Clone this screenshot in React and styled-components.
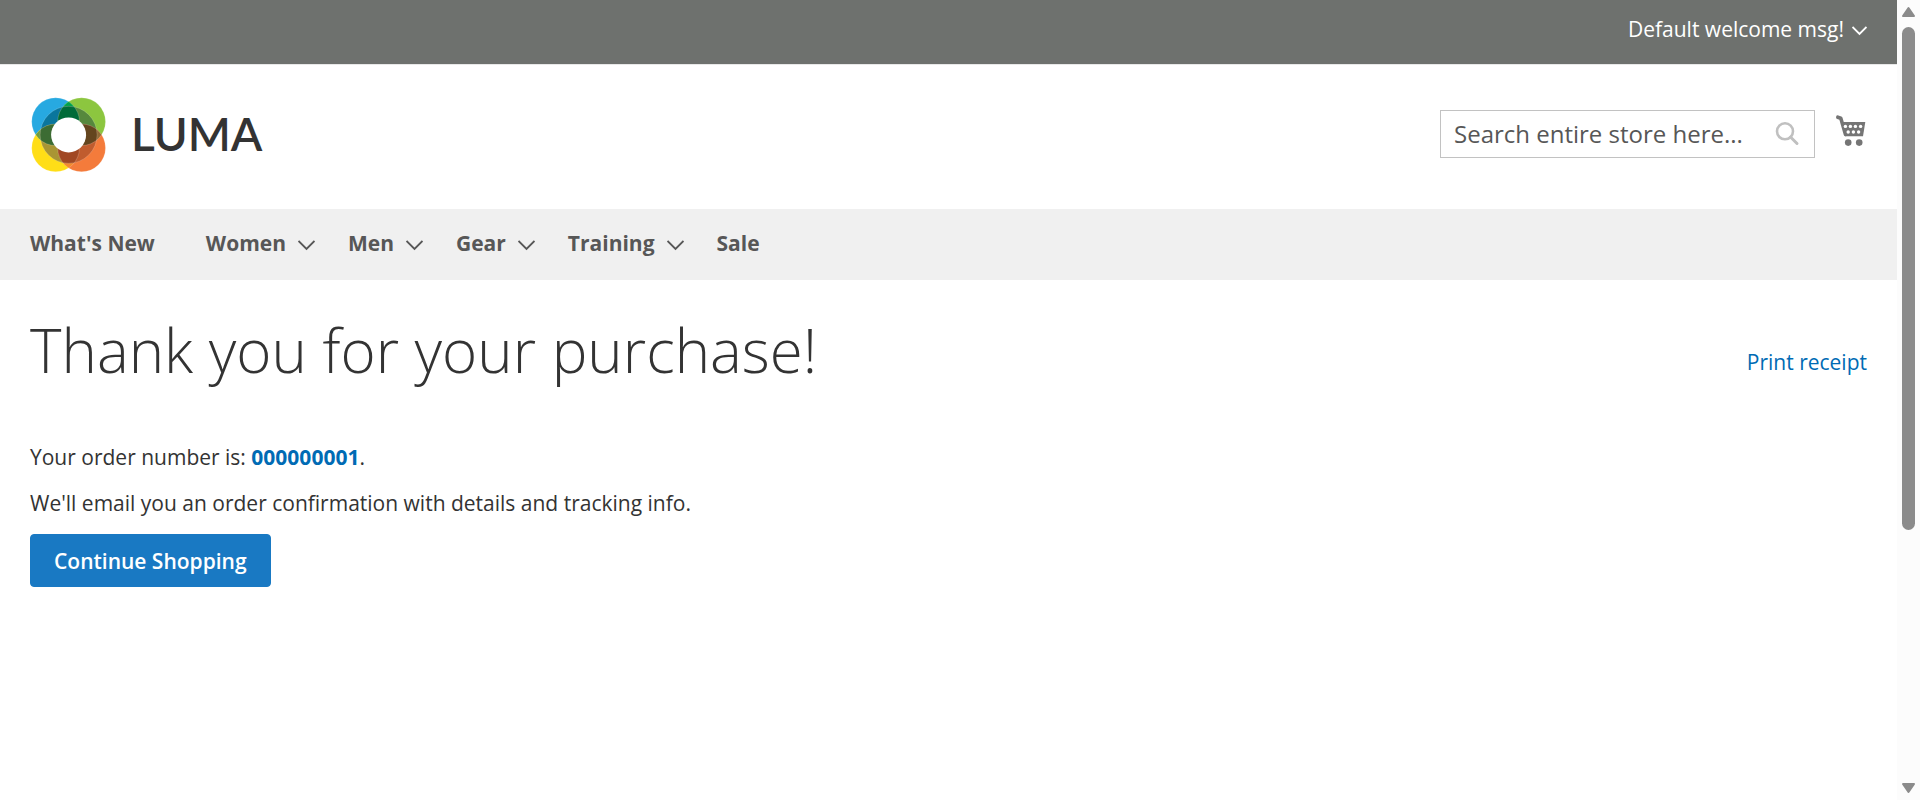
import React from "react";
import styled, { createGlobalStyle, css } from "styled-components";

const GlobalStyle = createGlobalStyle`
  *, *::before, *::after { box-sizing: border-box; }
  body {
    margin: 0;
    background: #fff;
    color: #333;
    font-family: "Open Sans", "Noto Sans", sans-serif;
    font-size: 21px;
    line-height: 30px;
  }
`;

const Window = styled.div`
  display: flex;
  align-items: flex-start;
  min-height: 100vh;
`;

const Page = styled.div`
  flex: 1;
  min-width: 0;
`;

const Panel = styled.div`
  display: flex;
  justify-content: flex-end;
  padding: 14px 30px 20px;
  background: #6e716e;
  color: #fff;
`;

const Customer = styled.button`
  display: flex;
  align-items: center;
  gap: 8px;
  padding: 0;
  border: 0;
  background: none;
  color: inherit;
  font: inherit;
  cursor: pointer;
`;

const Header = styled.header`
  display: flex;
  align-items: flex-start;
  justify-content: space-between;
  padding: 32px 30px 36px;
  border-top: 1px solid #e8e8e8;
`;

const Logo = styled.a`
  display: flex;
  align-items: center;
  gap: 23px;
  color: #333;
  text-decoration: none;
`;

const Wordmark = styled.span`
  padding-bottom: 2px;
  font-family: Lato, sans-serif;
  font-size: 46px;
  font-weight: 600;
  line-height: 48px;
`;

const Tools = styled.div`
  display: flex;
  align-items: flex-start;
  gap: 20px;
  padding-top: 13px;
`;

const Search = styled.form`
  display: flex;
  align-items: center;
  width: 375px;
  height: 48px;
  padding: 0 14px 0 13px;
  border: 1px solid #c2c2c2;
`;

const SearchInput = styled.input`
  flex: 1;
  min-width: 0;
  padding: 0;
  border: 0;
  outline: 0;
  background: none;
  color: #333;
  font: inherit;
  font-size: 24px;
  &::placeholder { color: #575757; opacity: 1; }
`;

const IconButton = styled.button`
  display: flex;
  padding: 0;
  border: 0;
  background: none;
  cursor: pointer;
`;

const CartLink = styled.a`
  display: flex;
  padding-top: 4px;
`;

const Nav = styled.nav`
  display: flex;
  gap: 33px;
  padding: 19px 30px 22px;
  background: #f0f0f0;
`;

const NavLink = styled.a`
  display: flex;
  align-items: center;
  gap: 12px;
  color: #575757;
  font-weight: 700;
  text-decoration: none;
  ${(p) => p.$plain && css`margin-right: 18px;`}
`;

const Main = styled.main`
  padding: 37px 30px;
`;

const TitleRow = styled.div`
  display: flex;
  align-items: flex-start;
  justify-content: space-between;
`;

const Title = styled.h1`
  margin: 0 0 59px;
  font-size: 60px;
  font-weight: 300;
  line-height: 66px;
`;

const TextLink = styled.a`
  color: #006bb4;
  text-decoration: none;
  font-weight: ${(p) => (p.$strong ? 700 : 400)};
`;

const Receipt = styled.div`
  padding-top: 30px;
`;

const Paragraph = styled.p`
  margin: 0 0 16px;
`;

const Primary = styled.button`
  height: 53px;
  padding: 0 23px;
  border: 1px solid #1979c3;
  border-radius: 4px;
  background: #1979c3;
  color: #fff;
  font: inherit;
  font-weight: 600;
  cursor: pointer;
`;

const Rail = styled.div`
  position: sticky;
  top: 0;
  display: flex;
  flex-direction: column;
  align-items: center;
  width: 23px;
  height: 100vh;
  padding: 6px 0;
  background: #fcfcfc;
`;

const Track = styled.div`
  flex: 1;
  width: 13px;
  margin: 9px 0 10px;
`;

const Thumb = styled.div`
  height: 67.5%;
  border-radius: 7px;
  background: #8b8b8b;
`;

const Chevron = ({ width = 17, height = 11, stroke = "#575757" }) => (
  <svg width={width} height={height + 4} viewBox={`0 -4 ${width} ${height + 4}`} aria-hidden="true">
    <path
      d={`M0.5 1 L${width / 2} ${height - 2} L${width - 0.5} 1`}
      fill="none"
      stroke={stroke}
      strokeWidth="1.9"
    />
  </svg>
);

const LumaMark = () => (
  <svg width="78" height="76" viewBox="30 97 78 76" aria-hidden="true">
    <defs>
      <clipPath id="blue"><circle cx="55.6" cy="121.7" r="23.9" /></clipPath>
      <clipPath id="green"><circle cx="81.6" cy="121.7" r="23.9" /></clipPath>
      <clipPath id="yellow"><circle cx="55.6" cy="147.9" r="23.9" /></clipPath>
      <clipPath id="orange"><circle cx="81.6" cy="147.9" r="23.9" /></clipPath>
    </defs>
    <circle cx="55.6" cy="121.7" r="23.9" fill="#27a9e1" />
    <circle cx="81.6" cy="121.7" r="23.9" fill="#8cc63f" />
    <circle cx="55.6" cy="147.9" r="23.9" fill="#ffde17" />
    <circle cx="81.6" cy="147.9" r="23.9" fill="#f47b3b" />
    <g clipPath="url(#blue)"><circle cx="81.6" cy="121.7" r="23.9" fill="#00a14b" /></g>
    <g clipPath="url(#blue)"><circle cx="55.6" cy="147.9" r="23.9" fill="#6f9b3f" /></g>
    <g clipPath="url(#green)"><circle cx="81.6" cy="147.9" r="23.9" fill="#8f6a35" /></g>
    <g clipPath="url(#yellow)"><circle cx="81.6" cy="147.9" r="23.9" fill="#f58a2c" /></g>
    <g clipPath="url(#blue)"><circle cx="68.6" cy="134.8" r="28.5" fill="#0a769d" /></g>
    <g clipPath="url(#green)"><circle cx="68.6" cy="134.8" r="28.5" fill="#56883d" /></g>
    <g clipPath="url(#yellow)"><circle cx="68.6" cy="134.8" r="28.5" fill="#a99534" /></g>
    <g clipPath="url(#orange)"><circle cx="68.6" cy="134.8" r="28.5" fill="#c05c2e" /></g>
    {[
      ["blue", "green", "#006b38"],
      ["blue", "yellow", "#3c6c33"],
      ["green", "orange", "#64451e"],
      ["yellow", "orange", "#a14823"],
    ].map(([a, b, fill]) => (
      <g key={a + b} clipPath={`url(#${a})`}>
        <g clipPath={`url(#${b})`}>
          <circle cx="68.6" cy="134.8" r="28.5" fill={fill} />
        </g>
      </g>
    ))}
    <g fill="none" stroke="#fff" strokeOpacity="0.3" strokeWidth="0.6">
      <circle cx="55.6" cy="121.7" r="23.9" />
      <circle cx="81.6" cy="121.7" r="23.9" />
      <circle cx="55.6" cy="147.9" r="23.9" />
      <circle cx="81.6" cy="147.9" r="23.9" />
      <circle cx="68.6" cy="134.8" r="28.5" />
    </g>
    <circle cx="68.6" cy="134.9" r="17.5" fill="#fff" />
  </svg>
);

const SearchIcon = () => (
  <svg width="25" height="24" viewBox="0 0 25 24" fill="none" stroke="#c0c0c0" aria-hidden="true">
    <circle cx="10" cy="9.3" r="8" strokeWidth="2.6" />
    <path d="M15.5 15 L22 21.5" strokeWidth="3" strokeLinecap="round" />
  </svg>
);

const CartIcon = () => (
  <svg width="32" height="34" viewBox="0 0 32 34" aria-hidden="true">
    <path
      d="M2.8 3.2 L5.8 4.2 L10.5 20.5"
      fill="none"
      stroke="#757575"
      strokeWidth="3.6"
      strokeLinecap="round"
      strokeLinejoin="round"
    />
    <path d="M6.5 8 H30.3 L28 22.3 H10.2 Z" fill="#757575" />
    <g fill="#fff">
      <circle cx="10.4" cy="12.4" r="1.7" />
      <circle cx="15.4" cy="12.4" r="1.7" />
      <circle cx="20.4" cy="12.4" r="1.7" />
      <circle cx="25.6" cy="12.4" r="1.7" />
      <circle cx="13.2" cy="18" r="1.7" />
      <circle cx="18.4" cy="18" r="1.7" />
      <circle cx="23.6" cy="18" r="1.7" />
    </g>
    <circle cx="13.2" cy="28.6" r="3.3" fill="#757575" />
    <circle cx="24.2" cy="28.6" r="3.3" fill="#757575" />
  </svg>
);

const Arrow = ({ down }) => (
  <svg width="15" height="12" viewBox="0 0 15 12" aria-hidden="true">
    <path
      d={down ? "M2 2 H13 L7.5 10 Z" : "M2 10 H13 L7.5 2 Z"}
      fill="#8b8b8b"
      stroke="#8b8b8b"
      strokeWidth="2"
      strokeLinejoin="round"
    />
  </svg>
);

const links = [
  { label: "What's New" },
  { label: "Women", menu: true },
  { label: "Men", menu: true },
  { label: "Gear", menu: true },
  { label: "Training", menu: true },
  { label: "Sale" },
];

export default function App() {
  return (
    <>
      <GlobalStyle />
      <Window>
        <Page>
          <Panel>
            <Customer type="button">
              Default welcome msg!
              <Chevron width={15} height={10} stroke="#fff" />
            </Customer>
          </Panel>
          <Header>
            <Logo href="#">
              <LumaMark />
              <Wordmark>LUMA</Wordmark>
            </Logo>
            <Tools>
              <Search onSubmit={(e) => e.preventDefault()}>
                <SearchInput
                  type="text"
                  aria-label="Search"
                  placeholder="Search entire store here..."
                />
                <IconButton type="submit" aria-label="Search">
                  <SearchIcon />
                </IconButton>
              </Search>
              <CartLink href="#" aria-label="My Cart">
                <CartIcon />
              </CartLink>
            </Tools>
          </Header>
          <Nav>
            {links.map(({ label, menu }) => (
              <NavLink key={label} href="#" $plain={!menu}>
                {label}
                {menu && <Chevron />}
              </NavLink>
            ))}
          </Nav>
          <Main>
            <TitleRow>
              <Title>Thank you for your purchase!</Title>
              <Receipt>
                <TextLink href="#">Print receipt</TextLink>
              </Receipt>
            </TitleRow>
            <Paragraph>
              Your order number is: <TextLink href="#" $strong>000000001</TextLink>.
            </Paragraph>
            <Paragraph>
              We'll email you an order confirmation with details and tracking info.
            </Paragraph>
            <Primary type="button">Continue Shopping</Primary>
          </Main>
        </Page>
        <Rail aria-hidden="true">
          <Arrow />
          <Track>
            <Thumb />
          </Track>
          <Arrow down />
        </Rail>
      </Window>
    </>
  );
}
